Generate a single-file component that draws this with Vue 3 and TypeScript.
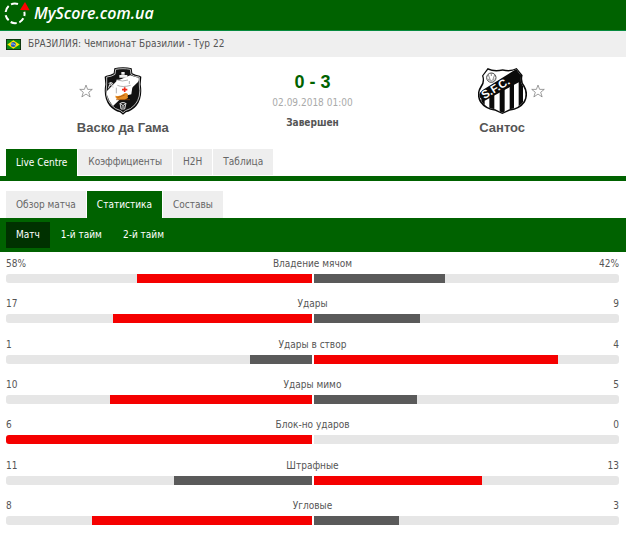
<script setup lang="ts">
import { ref } from 'vue'

interface Stat {
  label: string
  home: string
  away: string
  homeShare: number
  awayShare: number
}

function stat(label: string, home: number, away: number): Stat {
  const homeShare = Math.floor((home / (home + away)) * 100)
  return {
    label,
    home: String(home),
    away: String(away),
    homeShare,
    awayShare: 100 - homeShare,
  }
}

const stats: Stat[] = [
  { label: 'Владение мячом', home: '58%', away: '42%', homeShare: 57, awayShare: 43 },
  stat('Удары', 17, 9),
  stat('Удары в створ', 1, 4),
  stat('Удары мимо', 10, 5),
  stat('Блок-но ударов', 6, 0),
  stat('Штрафные', 11, 13),
  stat('Угловые', 8, 3),
]

const mainTabs = ['Live Centre', 'Коэффициенты', 'H2H', 'Таблица']
const subTabs = ['Обзор матча', 'Статистика', 'Составы']
const periods = ['Матч', '1-й тайм', '2-й тайм']

const mainTab = ref(0)
const subTab = ref(1)
const period = ref(0)
</script>

<template>
  <div class="page">
    <header class="top">
      <a class="brand" href="#">
        <svg class="brand-mark" viewBox="0 0 78 69" aria-hidden="true">
          <g fill="none" stroke="#fff" stroke-width="6">
            <path d="M5 30A28 28 0 0 1 14 12" />
            <path d="M21 7A28 28 0 0 1 42 6" />
            <path d="M5 40A28 28 0 0 0 14 55" />
            <path d="M20 60A28 28 0 0 0 38 63" />
            <path d="M46 61A28 28 0 0 0 58 49" />
            <path d="M61 42A28 28 0 0 0 61 29" />
          </g>
          <path d="M63 0L77 25L48 24Z" fill="#f00" />
        </svg>
        <span>MyScore.com.ua</span>
      </a>
    </header>

    <div class="league">
      <svg class="flag" viewBox="0 0 45 33" aria-hidden="true">
        <rect width="45" height="33" fill="#111" />
        <rect x="2" y="2" width="41" height="29" fill="#0a8a12" />
        <path d="M22 4L41 16.500L22 29L4 16.500Z" fill="#ffe600" />
        <circle cx="22" cy="16.500" r="7.500" fill="#2456b8" />
        <path d="M15 15Q22 13 29 19" fill="none" stroke="#dff" stroke-width="2" />
      </svg>
      <span>БРАЗИЛИЯ: Чемпионат Бразилии - Тур 22</span>
    </div>

    <section class="match">
      <div class="team">
        <div class="emblem">
          <button class="star" type="button" aria-label="Васко да Гама">
            <svg viewBox="0 0 39 39"><path d="M19.500 3L24 15H37L27 23L31 36L19.500 28L8 36L12 23L2 15H15Z" /></svg>
          </button>
          <svg class="vasco" viewBox="0 0 114 144" aria-hidden="true">
            <path d="M57 1Q43 1 31 4L29 19Q20 25 7 26L2 29L4 52Q-3 93 17 117Q30 132 48 136L57 143L66 136Q84 132 97 117Q117 93 110 52L112 29L107 26Q94 25 85 19L83 4Q71 1 57 1Z" fill="#080808" />
            <path d="M57 5Q46 5 35 7L33 22Q23 29 8 30L8 54Q2 91 21 113Q33 127 50 131L57 137L64 131Q81 127 93 113Q112 91 106 54V30Q91 29 81 22L79 7Q68 5 57 5Z" fill="#111" stroke="#ddd" stroke-width="2.500" />
            <path d="M104 32Q106 38 102 45L27 117Q15 104 9 84V72L38 42L79 25Q91 31 104 32Z" fill="#fff" />
            <path d="M46 24H70V32H46ZM52 15H62V23H52Z" fill="#eee" />
            <path d="M37 38H73L78 50L86 55L82 82Q60 90 36 83L33 58L40 55Z" fill="#fff" />
            <path d="M40 39Q55 45 72 39M40 55Q56 62 80 55M76 42V51M37 62V79" fill="none" stroke="#888" stroke-width="2" />
            <path d="M62 61V75M54 68H70" stroke="#f02a18" stroke-width="5" />
            <path d="M34 86Q48 90 58 81Q66 75 72 82Q70 88 72 93L62 98H42Q33 93 34 86Z" fill="#e58b22" />
            <path d="M40 92L62 84M36 98H78" stroke="#9d4b0b" stroke-width="2" />
            <g fill="none" stroke="#ddd" stroke-width="3">
              <path d="M13 64L20 47L28 63M14 57Q24 49 29 57M14 49Q24 43 28 51" />
              <path d="M48 108L51 126H62L66 108L57 116Z" fill="#222" />
              <path d="M50 108Q57 105 64 108M53 120H61" />
            </g>
          </svg>
          <span class="star-space"></span>
        </div>
        <a class="team-name" href="#">Васко да Гама</a>
      </div>

      <div class="result">
        <strong class="score">0 - 3</strong>
        <time class="kickoff" datetime="2018-09-02T01:00">02.09.2018 01:00</time>
        <span class="state">Завершен</span>
      </div>

      <div class="team">
        <div class="emblem">
          <span class="star-space"></span>
          <svg class="santos" viewBox="0 0 147 138" aria-hidden="true">
            <defs>
              <clipPath id="santos-shield">
                <path d="M30 5Q48 14 74 8Q98 14 115 4L129 23Q124 42 136 56Q149 77 137 100Q123 121 94 124L73 134L52 124Q24 121 10 100Q-3 77 12 56Q22 42 16 23Z" />
              </clipPath>
            </defs>
            <path d="M29 0Q48 10 74 4Q98 10 116 0L134 22Q129 40 140 53Q154 77 141 103Q126 125 95 128L73 138L51 128Q21 125 6 103Q-8 77 8 53Q18 40 12 23Z" fill="#0a0a0a" />
            <g clip-path="url(#santos-shield)">
              <rect width="147" height="138" fill="#fff" />
              <path d="M10 80H20V138H10ZM34 62H49V138H34ZM65 55H80V138H65ZM95 40H108V138H95ZM122 20H135V138H122Z" fill="#0a0a0a" />
              <path d="M0 81L14 66L104 10L116 2L137 28L124 42L20 98L8 91Z" fill="#0a0a0a" />
            </g>
            <circle cx="40" cy="29" r="14" fill="#fff" stroke="#444" stroke-width="3" />
            <path d="M31 20L36 34L40 40L45 34L50 20M40 16V24M30 33L36 37M50 33L45 37" fill="none" stroke="#555" stroke-width="2" />
            <text class="santos-letters" x="19" y="94" transform="rotate(-31 19 94)">S.F.C.</text>
          </svg>
          <button class="star" type="button" aria-label="Сантос">
            <svg viewBox="0 0 39 39"><path d="M19.500 3L24 15H37L27 23L31 36L19.500 28L8 36L12 23L2 15H15Z" /></svg>
          </button>
        </div>
        <a class="team-name" href="#">Сантос</a>
      </div>
    </section>

    <nav class="tabs main-tabs">
      <button
        v-for="(tab, i) in mainTabs"
        :key="tab"
        type="button"
        class="tab"
        :class="{ active: i === mainTab }"
        @click="mainTab = i"
      >{{ tab }}</button>
    </nav>

    <nav class="tabs sub-tabs">
      <button
        v-for="(tab, i) in subTabs"
        :key="tab"
        type="button"
        class="tab"
        :class="{ active: i === subTab }"
        @click="subTab = i"
      >{{ tab }}</button>
    </nav>

    <nav class="periods">
      <button
        v-for="(name, i) in periods"
        :key="name"
        type="button"
        class="period"
        :class="{ active: i === period }"
        @click="period = i"
      >{{ name }}</button>
    </nav>

    <section class="stats">
      <div v-for="s in stats" :key="s.label" class="stat">
        <div class="values">
          <span>{{ s.home }}</span>
          <span class="label">{{ s.label }}</span>
          <span class="away-value">{{ s.away }}</span>
        </div>
        <div class="bars">
          <div class="track home">
            <div class="fill" :class="{ lead: s.homeShare > s.awayShare }" :style="{ width: s.homeShare + '%' }"></div>
          </div>
          <div class="track away">
            <div class="fill" :class="{ lead: s.awayShare > s.homeShare }" :style="{ width: s.awayShare + '%' }"></div>
          </div>
        </div>
      </div>
    </section>
  </div>
</template>

<style>
body {
  margin: 0;
  background: #fff;
}
</style>

<style scoped>
.page {
  box-sizing: border-box;
  min-height: 100vh;
  display: flex;
  flex-direction: column;
  font-family: "DejaVu Sans Condensed", "DejaVu Sans", sans-serif;
  font-size: 10px;
  line-height: 14px;
  color: #555;
}
button {
  font: inherit;
  border: 0;
  margin: 0;
  cursor: pointer;
}
a {
  color: inherit;
  text-decoration: none;
}
.top {
  background: #006200;
  border-bottom: 1px solid #078a3e;
  height: 30px;
  display: flex;
  padding: 0 4px;
}
.brand {
  display: flex;
  align-items: center;
  gap: 4px;
  padding-bottom: 4px;
  color: #fff;
  font: italic 600 16px/24px "Open Sans", sans-serif;
}
.brand-mark {
  width: 26px;
  height: 23px;
}
.league {
  display: flex;
  align-items: center;
  gap: 7px;
  height: 26px;
  padding: 0 6px;
  background: #efefef;
}
.flag {
  width: 15px;
  height: 11px;
}
.match {
  display: grid;
  grid-template-columns: repeat(3, 1fr);
  padding: 10px 29px 13px 28px;
}
.team {
  display: flex;
  flex-direction: column;
  align-items: center;
  gap: 5px;
}
.emblem {
  display: flex;
  align-items: center;
  justify-content: center;
  height: 48px;
  gap: 11px;
}
.team:last-child .emblem {
  gap: 4px;
}
.vasco {
  width: 38px;
  height: 48px;
}
.santos {
  width: 49px;
  height: 46px;
}
.santos-letters {
  font: bold 34px "Liberation Sans", sans-serif;
  fill: #fff;
}
.star {
  padding: 0;
  background: none;
  width: 14px;
  height: 14px;
}
.star svg {
  display: block;
  width: 14px;
  height: 14px;
  fill: #fff;
  stroke: #777;
  stroke-width: 2;
}
.star-space {
  width: 14px;
}
.team-name {
  font: bold 13px/16px "Liberation Sans", sans-serif;
}
.result {
  display: flex;
  flex-direction: column;
  align-items: center;
}
.score {
  margin-top: 4px;
  font: bold 18px/22px "Liberation Sans", sans-serif;
  color: #006200;
}
.kickoff {
  margin-top: 3px;
  color: #aaa;
}
.state {
  margin-top: 6px;
  font-weight: bold;
}
.tabs {
  display: flex;
  gap: 1px;
  padding: 0 6px;
}
.tab {
  height: 26px;
  padding: 0 10px;
  background: #eee;
  color: #666;
}
.main-tabs {
  border-bottom: 5px solid #006200;
  margin-bottom: 10px;
}
.main-tabs .tab {
  margin-bottom: 1px;
}
.main-tabs .tab.active {
  height: 27px;
  margin-bottom: 0;
}
.tabs .tab.active {
  background: #006200;
  color: #fff;
}
.sub-tabs .tab {
  height: 27px;
}
.periods {
  display: flex;
  gap: 1px;
  padding: 4px 6px;
  background: #006200;
}
.period {
  height: 26px;
  padding: 0 10px;
  background: none;
  color: #fff;
}
.period.active {
  background: #003100;
}
.stats {
  flex: 1;
  display: flex;
  flex-direction: column;
  justify-content: space-between;
  padding: 5px 7px 10px 6px;
}
.values {
  display: grid;
  grid-template-columns: 1fr auto 1fr;
  margin-bottom: 3px;
}
.away-value {
  text-align: right;
}
.bars {
  display: grid;
  grid-template-columns: 1fr 1fr;
  gap: 2px;
}
.track {
  display: flex;
  height: 9px;
  overflow: hidden;
  background: #e6e6e6;
}
.home {
  justify-content: flex-end;
  border-radius: 3px 0 0 3px;
}
.away {
  border-radius: 0 3px 3px 0;
}
.fill {
  background: #5a5a5a;
}
.fill.lead {
  background: #f50000;
}
</style>
